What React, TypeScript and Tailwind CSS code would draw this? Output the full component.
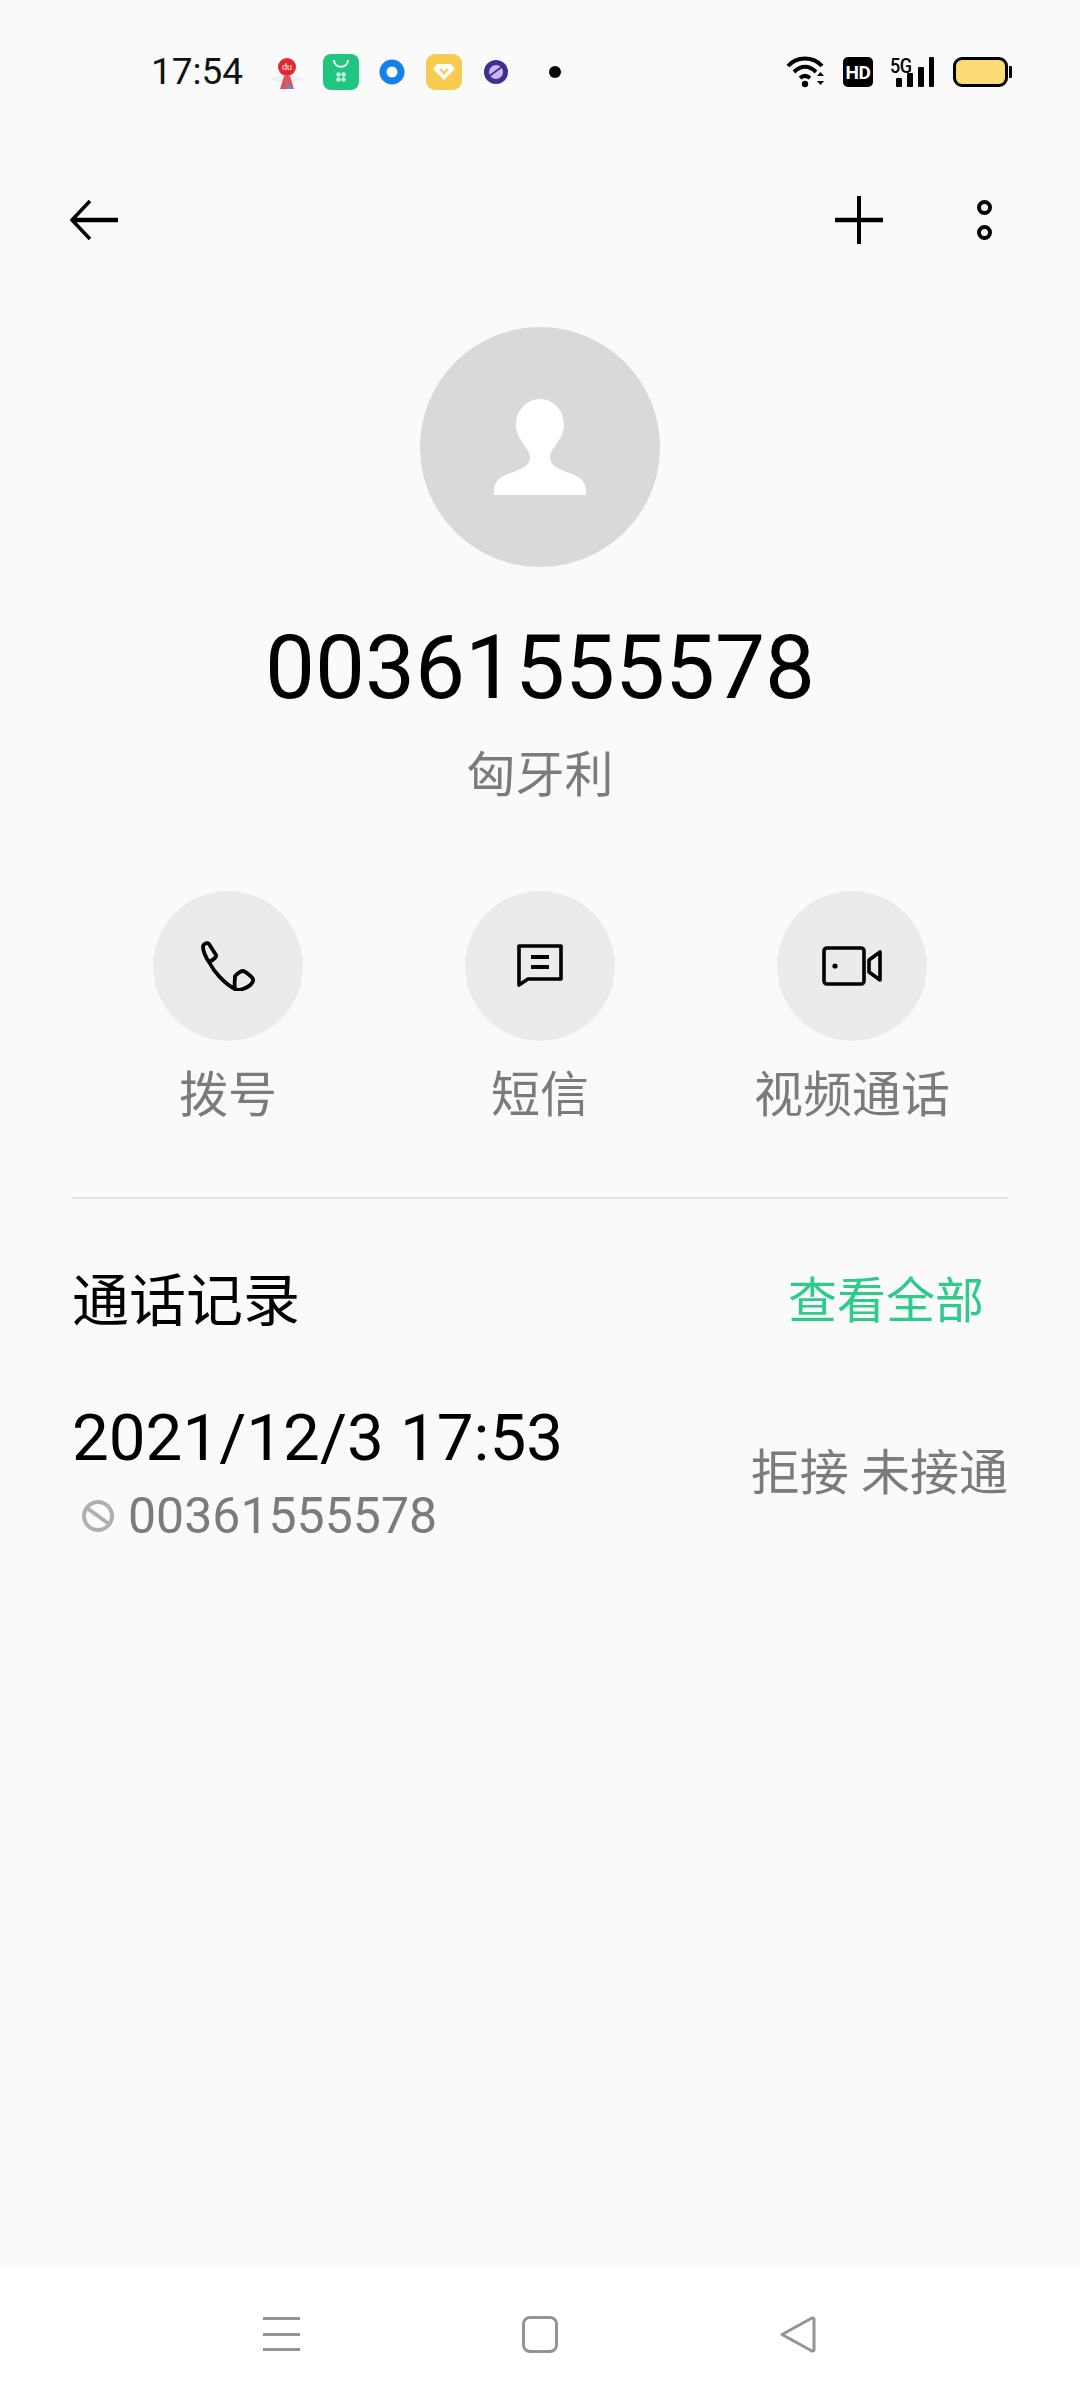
const font = "font-['Roboto','Noto_Sans_CJK_SC',sans-serif]"

function StatusIcons() {
  return (
    <div className="ml-[24px] flex items-center">
      {/* du map */}
      <svg width="40" height="40" viewBox="0 0 40 40">
        <path d="M2 27l18-5 18 5-18 6z" fill="#f1efef" />
        <path d="M17 24h6l4 13H13z" fill="#d8555f" />
        <path d="M20 30l6 7h-6z" fill="#5b8fd0" />
        <circle cx="20" cy="15" r="9" fill="#e5262e" />
        <text x="20" y="18" fontSize="9" fill="#fff" textAnchor="middle" fontFamily="Roboto">du</text>
      </svg>
      {/* app store */}
      <svg width="36" height="36" viewBox="0 0 36 36" className="ml-[16px]">
        <rect width="36" height="36" rx="8" fill="#1fc67f" />
        <path d="M11 6c0 9 14 9 14 0" fill="none" stroke="#fff" strokeWidth="2" />
        <circle cx="15.5" cy="20.5" r="2.2" fill="#c8f3de" />
        <circle cx="20.5" cy="20.5" r="2.2" fill="#c8f3de" />
        <circle cx="15.5" cy="25.5" r="2.2" fill="#c8f3de" />
        <circle cx="20.5" cy="25.5" r="2.2" fill="#c8f3de" />
      </svg>
      <svg width="36" height="36" viewBox="0 0 36 36" className="ml-[15px]">
        <circle cx="18" cy="18" r="9" fill="none" stroke="#1282ea" strokeWidth="7" />
      </svg>
      <svg width="36" height="36" viewBox="0 0 36 36" className="ml-[16px]">
        <rect width="36" height="36" rx="9" fill="#f7cb4d" />
        <path d="M7 15l4-5h14l4 5-11 11z" fill="#fff" />
        <path d="M14 15l4 4 4-4" fill="none" stroke="#f7cb4d" strokeWidth="2.4" />
      </svg>
      <svg width="26" height="26" viewBox="0 0 26 26" className="ml-[21px]">
        <circle cx="13" cy="13" r="12" fill="#3c2f8f" />
        <circle cx="13" cy="13" r="7" fill="#c8b8ee" />
        <path d="M5 18L20 7" stroke="#3c2f8f" strokeWidth="1.6" />
      </svg>
      <span className="ml-[40px] h-[12px] w-[12px] rounded-full bg-black" />
    </div>
  )
}

function StatusRight() {
  return (
    <div className="flex items-center">
      <svg width="42" height="32" viewBox="0 0 42 32">
        <path d="M2 10C11 0 27 0 36 10" fill="none" stroke="#000" strokeWidth="4" />
        <path d="M8 16c7-7 15-7 22 0" fill="none" stroke="#000" strokeWidth="4" />
        <path d="M14 22c3.500-3 6.500-3 10 0" fill="none" stroke="#000" strokeWidth="4" />
        <circle cx="19" cy="28" r="3.200" fill="#000" />
        <path d="M31 20l3.500-4 3.500 4zM31 25l3.500 4 3.500-4z" fill="#000" />
      </svg>
      <span className="ml-[15px] flex h-[30px] w-[30px] items-center justify-center rounded-[5px] bg-black font-['Roboto'] text-[19px] leading-none font-bold tracking-[-0.5px] text-white">
        HD
      </span>
      <div className="relative ml-[18px] h-[30px] w-[44px]">
        <span className="absolute -top-[1px] -left-[1px] origin-top scale-y-110 font-['Roboto'] text-[18px] leading-none font-medium tracking-[-0.5px] text-black">5G</span>
        <div className="absolute bottom-0 left-[5px] flex items-end gap-[5px]">
          <span className="h-[9px] w-[6px] rounded-[1px] bg-black" />
          <span className="h-[14px] w-[6px] rounded-[1px] bg-black" />
          <span className="h-[20px] w-[6px] rounded-[1px] bg-black" />
          <span className="h-[30px] w-[5px] rounded-[1px] bg-black" />
        </div>
      </div>
      <div className="ml-[18px] flex items-center">
        <div className="h-[30px] w-[55px] rounded-[9px] border-[3px] border-black bg-[#fadb75]" />
        <span className="ml-[1px] h-[12px] w-[3px] rounded-r-[1px] bg-black" />
      </div>
    </div>
  )
}

function ActionButton({ label, children }: { label: string; children: React.ReactNode }) {
  return (
    <div className="flex w-[312px] flex-col items-center">
      <div className="flex h-[150px] w-[150px] items-center justify-center rounded-full bg-[#ebebeb]">{children}</div>
      <span className="mt-[23px] text-[49px] leading-[64px] text-[#7b7b7b]">{label}</span>
    </div>
  )
}

export default function App() {
  return (
    <div className={`flex h-[2400px] w-[1080px] flex-col bg-[#fafafa] text-black ${font}`}>
      {/* Status bar */}
      <div className="flex h-[144px] shrink-0 items-center justify-between pl-[151px] pr-[68px]">
        <div className="flex items-center">
          <span className="text-[37px] leading-[44px] text-[#111]">17:54</span>
          <StatusIcons />
        </div>
        <StatusRight />
      </div>

      {/* Toolbar */}
      <div className="flex h-[183px] shrink-0 items-start justify-between pt-[52px] pl-[70px] pr-[88px]">
        <svg width="48" height="48" viewBox="0 0 48 48">
          <path d="M20 5L2 24l18 19" fill="none" stroke="#000" strokeWidth="3.500" />
          <path d="M3 24h45" stroke="#000" strokeWidth="4.500" />
        </svg>
        <div className="flex items-center">
          <svg width="48" height="48" viewBox="0 0 48 48">
            <path d="M24 0v48" stroke="#000" strokeWidth="4" />
            <path d="M0 24h48" stroke="#000" strokeWidth="4.500" />
          </svg>
          <div className="ml-[94px] flex flex-col gap-[10px]">
            <span className="h-[15px] w-[15px] rounded-full border-[4px] border-black" />
            <span className="h-[15px] w-[15px] rounded-full border-[4px] border-black" />
          </div>
        </div>
      </div>

      {/* Avatar */}
      <div className="flex flex-col items-center">
        <div className="flex h-[240px] w-[240px] items-center justify-center rounded-full bg-[#d9d9d9]">
          <svg width="92" height="96" viewBox="0 0 92 96">
            <path
              d="M46 0C59 0 70 11 70 26C70 40 56 50 56 58C56 66 62 68 72 73C86 77 92 82 92 92V96H0V92C0 82 6 77 20 73C30 68 36 66 36 58C36 50 22 40 22 26C22 11 33 0 46 0Z"
              fill="#fff"
            />
          </svg>
        </div>
        <div className="mt-[49px] text-[89px] leading-[104px]">00361555578</div>
        <div className="mt-[24px] text-[49px] leading-[64px] text-[#7b7b7b]">匈牙利</div>
      </div>

      {/* Actions */}
      <div className="mt-[83px] flex justify-center">
        <ActionButton label="拨号">
          <svg width="54" height="50" viewBox="0 0 54 50" fill="none" stroke="#000" strokeWidth="3.800" strokeLinejoin="round">
            <path d="M2 6c0-3 4-5 6-3l7 11c1 2-3 5-7 7C5 17 2 10 2 6zM8 21c5 10 16 22 26 27" />
            <path d="M34 48c2 1 5 1 8 0 6-2 11-6 10-10-1-2-8-8-10-8-2 0-5 2-8 5 0 4-1 9 0 13z" />
          </svg>
        </ActionButton>
        <ActionButton label="短信">
          <svg width="46" height="44" viewBox="0 0 46 44">
            <path d="M2 2h42v33H11l-9 6z" fill="none" stroke="#000" strokeWidth="3.600" strokeLinejoin="round" />
            <path d="M14 13h18M14 23h18" stroke="#000" strokeWidth="4" />
          </svg>
        </ActionButton>
        <ActionButton label="视频通话">
          <svg width="60" height="40" viewBox="0 0 60 40" fill="none" stroke="#000" strokeWidth="3.600" strokeLinejoin="round">
            <rect x="2" y="2" width="40" height="36" rx="3" />
            <circle cx="13" cy="20" r="2.600" fill="#000" stroke="none" />
            <path d="M47 14l11-8v28l-11-8z" />
          </svg>
        </ActionButton>
      </div>

      <div className="mx-[72px] mt-[69px] h-[2px] shrink-0 bg-[#e2e2e2]" />

      {/* Call log */}
      <div className="mt-[67px] flex items-center justify-between pl-[72px] pr-[96px]">
        <span className="text-[57px] leading-[72px]">通话记录</span>
        <span className="text-[49px] leading-[72px] text-[#2fcb8b]">查看全部</span>
      </div>
      <div className="mt-[60px] flex items-center justify-between pl-[72px] pr-[72px]">
        <div>
          <div className="text-[65.5px] leading-[80px]">2021/12/3 17:53</div>
          <div className="mt-[8px] flex items-center">
            <svg width="34" height="34" viewBox="0 0 34 34" className="ml-[9px]" fill="none" stroke="#b0b0b0" strokeWidth="4">
              <circle cx="17" cy="17" r="14" />
              <path d="M6 9l22 16" />
            </svg>
            <span className="ml-[13px] text-[50px] leading-[60px] text-[#7b7b7b]">00361555578</span>
          </div>
        </div>
        <span className="mt-[4px] text-[49px] leading-[64px] text-[#7b7b7b]">拒接 未接通</span>
      </div>

      {/* Nav bar */}
      <div className="mt-auto flex h-[132px] shrink-0 items-center bg-white pl-[263px]">
        <div className="flex h-[34px] w-[37px] flex-col justify-between">
          <span className="h-[3px] bg-[#949494]" />
          <span className="h-[3px] bg-[#949494]" />
          <span className="h-[3px] bg-[#949494]" />
        </div>
        <div className="ml-[222px] h-[37px] w-[36px] rounded-[8px] border-[3px] border-[#949494]" />
        <svg width="36" height="37" viewBox="0 0 36 37" className="ml-[222px]">
          <path d="M2 18.500L32 2a1.500 1.500 0 0 1 2 1v31a1.500 1.500 0 0 1-2 1z" fill="none" stroke="#949494" strokeWidth="3" strokeLinejoin="round" />
        </svg>
      </div>
    </div>
  )
}
